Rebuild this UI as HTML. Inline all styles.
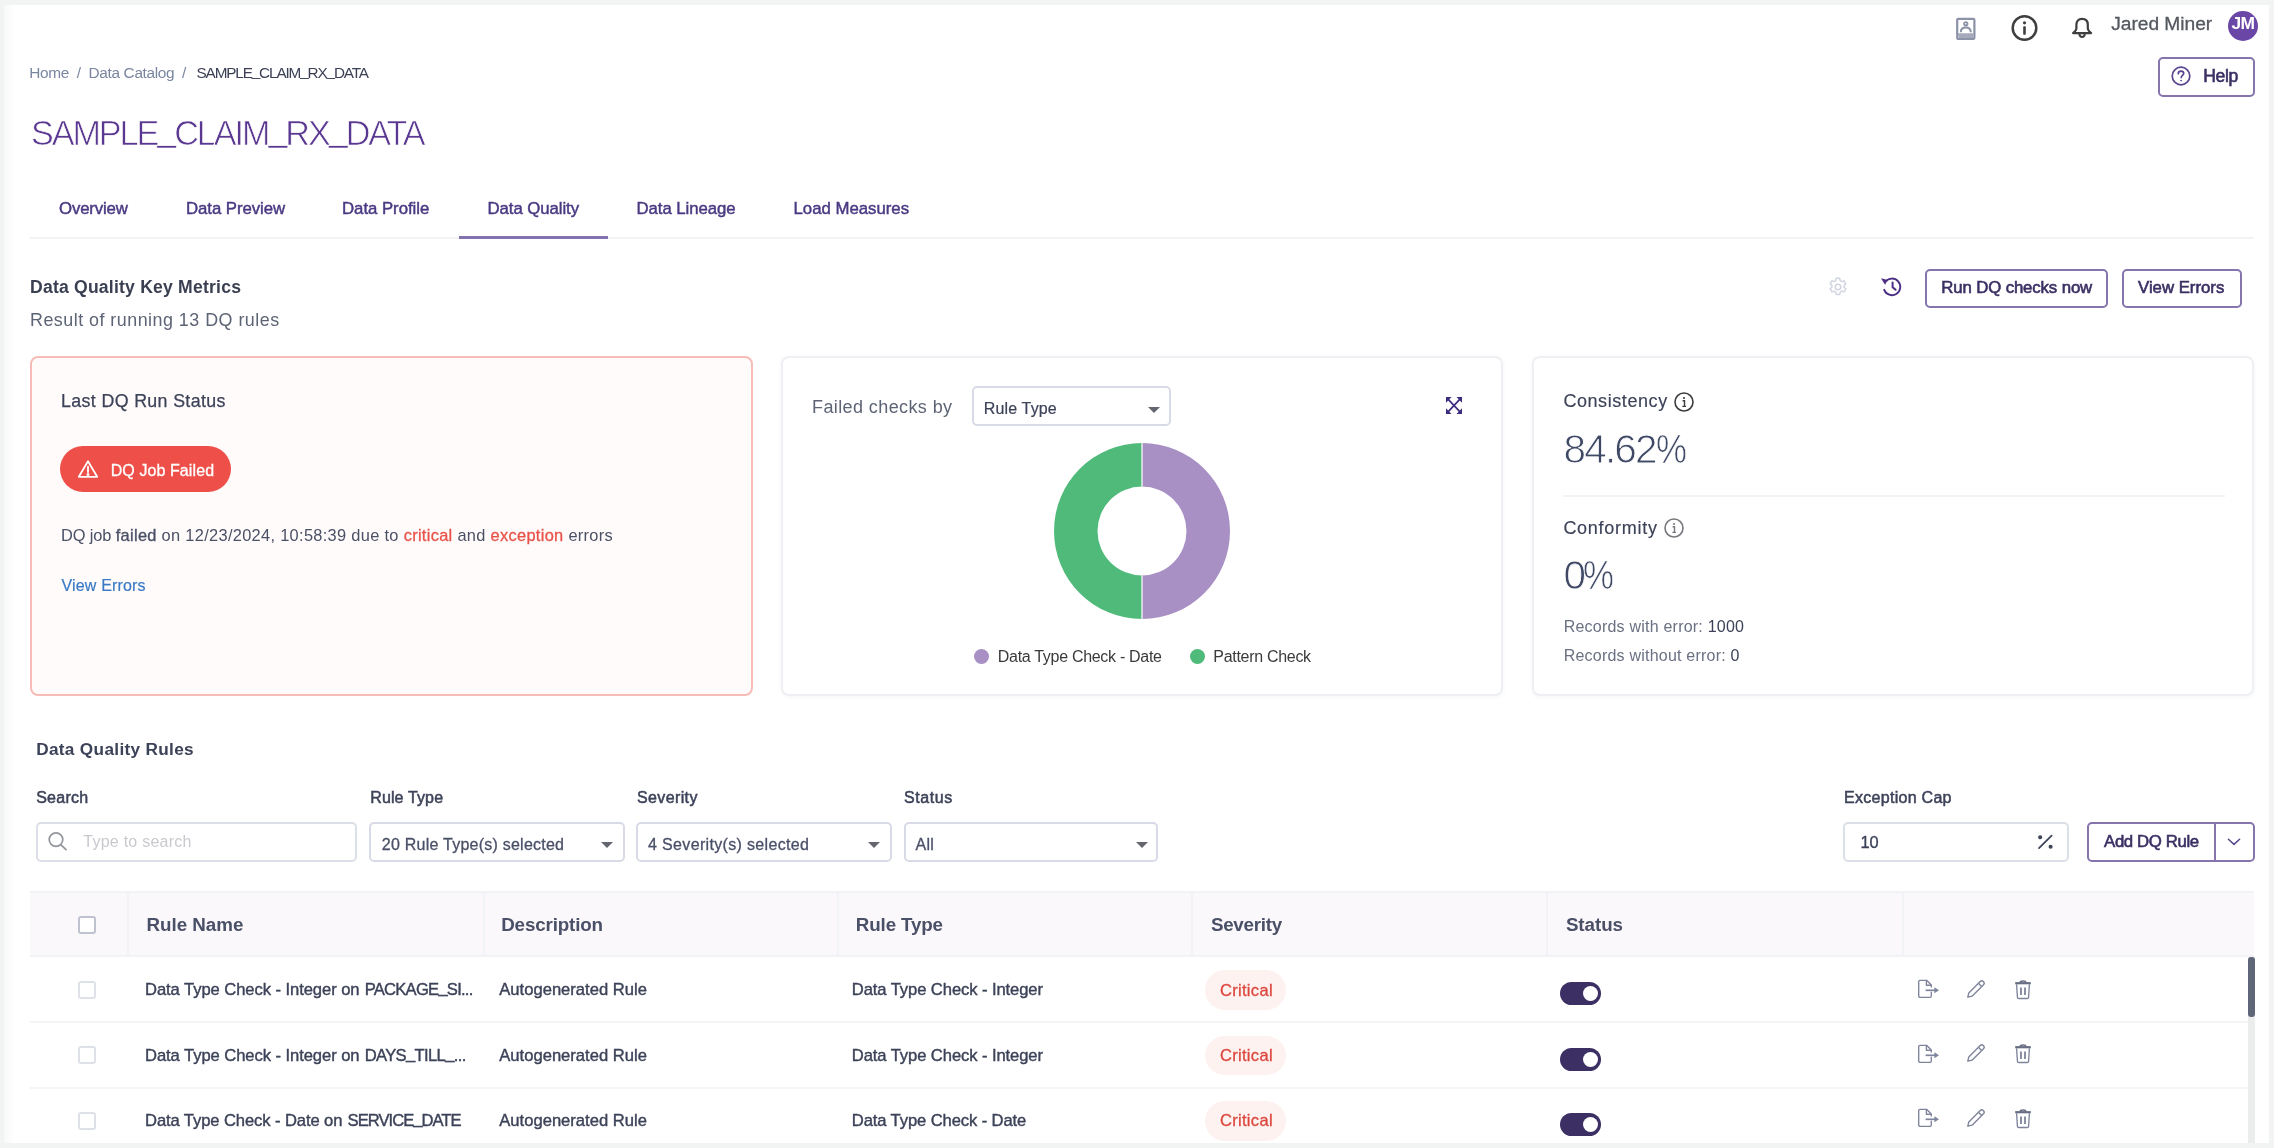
<!DOCTYPE html>
<html lang="en"><head><meta charset="utf-8"><title>SAMPLE_CLAIM_RX_DATA - Data Quality</title>
<style>
*{margin:0;padding:0;box-sizing:border-box}
html,body{width:2274px;height:1148px;overflow:hidden;background:#f2f4f3;font-family:"Liberation Sans", sans-serif;}
.t{position:absolute;white-space:nowrap;line-height:1;}
.t b.m{font-weight:400;-webkit-text-stroke:0.35px currentColor}
.t b.r{font-weight:400;color:#e8524a;-webkit-text-stroke:0.3px #e8524a}
.t b.d{font-weight:400;color:#3c4258}
.t i.u{font-style:normal;position:relative;top:-.115em}
.t .pc{display:inline-block;transform:scaleX(.86);transform-origin:0 50%;margin-right:-.124em;-webkit-text-stroke-width:.7px}
#page{position:absolute;left:0;top:0;width:2274px;height:1148px;background:#fff;overflow:hidden}
#page>*{position:absolute}
#wrap{left:0;top:0;width:2274px;height:1148px}
#wrap>*{position:absolute}
.card{border-radius:8px;background:#fff;border:2px solid #eff0f4;box-shadow:0 1px 4px rgba(40,50,80,.05)}
.card.fail{background:#fffbfa;border-color:#f7bcb7;box-shadow:none}
.btn{border:2px solid #8674ad;border-radius:5px;background:#fff}
.inp{border:2px solid #dcdfe7;border-radius:5px;background:#fff}
.sel{border:2px solid #d8dbe7;border-radius:5px;background:#fff}
.caret{width:0;height:0;border-left:6px solid transparent;border-right:6px solid transparent;border-top:6px solid #63666f}
.cb{width:18px;height:18px;border:2px solid #dfe1e8;border-radius:3px;background:#fff}
.cb.h{border-color:#bfc3d0}
.pill{border-radius:20px;background:#fef2f1}
.tog{width:41px;height:23px;border-radius:12px;background:#3b2f63}
.tog i{position:absolute;right:3.500px;top:4px;width:15px;height:15px;border-radius:50%;background:#fff}
.hl{background:#f4f4f7;height:2px}
.vl{background:#f2f3f7;width:2px}
svg{overflow:visible}
#frame>div{position:absolute}
#page{filter:blur(.7px)}
</style></head>
<body>
<div id="page">
<div id="wrap">
<!-- soft left edge -->
<div style="left:4px;top:5px;width:10px;height:1138px;background:linear-gradient(90deg,#f7f8f8,#ffffff)"></div>

<!-- top right icons -->
<svg style="left:1955px;top:17px" width="22" height="24" viewBox="0 0 22 24" fill="none" stroke="#8c92a8" stroke-width="2.200">
  <rect x="2.200" y="1.800" width="17.200" height="20.200" rx="1.200"/>
  <circle cx="10.800" cy="6.800" r="1.700" stroke-width="1.800"/>
  <path d="M5.800 15.200c0-3.200 2.200-4.600 5-4.600s5 1.400 5 4.600" stroke-width="2"/>
  <path d="M3 17.400h16M3.500 19.800h15" stroke="#a4a9bb" stroke-width="2.400"/>
</svg>
<svg style="left:2010px;top:14px" width="29" height="29" viewBox="0 0 29 29" fill="none">
  <circle cx="14.500" cy="14" r="11.800" stroke="#3f3f41" stroke-width="2.500"/>
  <circle cx="14.500" cy="8.800" r="1.600" fill="#3f3f41"/>
  <rect x="13.200" y="12.300" width="2.600" height="8.400" rx=".6" fill="#3f3f41"/>
</svg>
<svg style="left:2070px;top:16px" width="24" height="24" viewBox="0 0 24 24" fill="none" stroke="#3f3f41" stroke-width="2.200" stroke-linejoin="round" stroke-linecap="round">
  <path d="M12.100 2.900c-3.700 0-5.700 2.500-5.700 5.800v3.600c0 1.500-.6 2.400-1.600 3.300l-1.700 1.500h18l-1.700-1.500c-1-.9-1.600-1.800-1.600-3.300V8.700c0-3.300-2-5.800-5.700-5.800z"/>
  <path d="M9.400 17.600c0 2 1.100 3.400 2.700 3.400s2.700-1.400 2.700-3.400" stroke-width="2"/>
</svg>
<div style="left:2228px;top:10.500px;width:30px;height:30px;border-radius:50%;background:#6a46a6"></div>

<!-- help button -->
<div class="btn" style="left:2158px;top:57px;width:97px;height:39.500px"></div>
<svg style="left:2170px;top:64.800px" width="22" height="22" viewBox="0 0 22 22" fill="none" stroke="#5a4590" stroke-width="1.700">
  <circle cx="11" cy="11" r="8.800"/>
  <path d="M8.300 8.700c0-1.600 1.200-2.600 2.700-2.600s2.700 1 2.700 2.400c0 1.700-2.500 2-2.500 4" stroke-linecap="round"/>
  <circle cx="11.100" cy="15.600" r=".9" fill="#5a4590" stroke="none"/>
</svg>

<!-- tabs line -->
<div class="hl" style="left:30px;top:236.500px;width:2224px;background:#f3f3f6"></div>
<div style="left:459px;top:236px;width:149px;height:2.500px;background:#8372ad"></div>

<!-- key metrics actions -->
<svg style="left:1828px;top:277px" width="20" height="20" viewBox="0 0 20 20" fill="none" stroke="#d0d5e0" stroke-width="1.500" stroke-linejoin="round">
  <path d="M8.300 1.300h3.400l.5 2.300 1.700 1 2.200-.8 1.700 3-1.700 1.600v1.900l1.700 1.600-1.700 3-2.200-.8-1.700 1-.5 2.300H8.300l-.5-2.300-1.700-1-2.200.8-1.700-3 1.700-1.600V8.400L2.200 6.800l1.700-3 2.200.8 1.700-1z"/>
  <circle cx="10" cy="10" r="2.800"/>
</svg>
<svg style="left:1880px;top:276px" width="23" height="22" viewBox="0 0 23 22" fill="none" stroke="#4a2f85" stroke-width="1.900" stroke-linecap="round">
  <path d="M5.400 5.800A8.300 8.300 0 1 1 4.200 13.800"/>
  <path d="M1 2.300l5.800 1.500-1.600 5.300z" fill="#4a2f85" stroke="none"/>
  <path d="M12.600 6.400v4.800l3 2.600" stroke-width="2"/>
</svg>
<div class="btn" style="left:1925px;top:268.500px;width:183px;height:39.500px"></div>
<div class="btn" style="left:2122px;top:268.500px;width:120px;height:39.500px"></div>

<!-- cards -->
<div class="card fail" style="left:30px;top:355.500px;width:723px;height:340px"></div>
<div class="card" style="left:781px;top:355.500px;width:722px;height:340px"></div>
<div class="card" style="left:1532px;top:355.500px;width:722px;height:340px"></div>

<!-- card1 pill -->
<div style="left:60px;top:445.500px;width:171px;height:46px;border-radius:23px;background:#ee4f48"></div>
<svg style="left:77px;top:458.500px" width="22" height="20" viewBox="0 0 22 20" fill="none" stroke="#fff" stroke-width="1.800" stroke-linejoin="round" stroke-linecap="round">
  <path d="M11 2.200L1.800 17.800h18.400z"/>
  <path d="M11 7.800v5.200" stroke-width="1.900"/>
  <circle cx="11" cy="15.400" r=".6" fill="#fff"/>
</svg>

<!-- card2 -->
<div class="sel" style="left:972px;top:386px;width:199px;height:40px"></div>
<div class="caret" style="left:1148px;top:406.500px"></div>
<svg style="left:1444.500px;top:396px" width="18" height="19" viewBox="0 0 18 19" fill="#3d2b7d" stroke="#3d2b7d">
  <path d="M3 3.200L15 15.800M15 3.200L3 15.800" stroke-width="1.700" fill="none"/>
  <path d="M1 1h5.500L1 6.800zM17 1h-5.500L17 6.800zM1 18h5.500L1 12.200zM17 18h-5.500L17 12.200z" stroke="none"/>
</svg>
<svg style="left:1052px;top:441px" width="180" height="180" viewBox="-90 -90 180 180">
  <path d="M0 -88A88 88 0 0 1 0 88L0 44.500A44.500 44.500 0 0 0 0 -44.500Z" fill="#a88fc4"/>
  <path d="M0 88A88 88 0 0 1 0 -88L0 -44.500A44.500 44.500 0 0 0 0 44.500Z" fill="#50ba7a"/>
  <path d="M0 -88V-44.500M0 44.500V88" stroke="#fff" stroke-width="1.200"/>
</svg>
<div style="left:974px;top:648.500px;width:15px;height:15px;border-radius:50%;background:#a88fc4"></div>
<div style="left:1189.500px;top:648.500px;width:15px;height:15px;border-radius:50%;background:#50ba7a"></div>

<!-- card3 -->
<svg style="left:1673px;top:390.500px" width="22" height="22" viewBox="0 0 22 22" fill="none">
  <circle cx="11" cy="11" r="9" stroke="#3c3c40" stroke-width="1.600"/>
  <circle cx="11" cy="7" r="1.100" fill="#3c3c40"/><path d="M9.600 9.800h1.900v5.400M9.400 15.400h3.600" stroke="#3c3c40" stroke-width="1.400"/>
</svg>
<div class="hl" style="left:1563px;top:494.500px;width:662px;background:#f3f3f6"></div>
<svg style="left:1663.200px;top:517.200px" width="22" height="22" viewBox="0 0 22 22" fill="none">
  <circle cx="11" cy="11" r="9" stroke="#77787d" stroke-width="1.600"/>
  <circle cx="11" cy="7" r="1.100" fill="#77787d"/><path d="M9.600 9.800h1.900v5.400M9.400 15.400h3.600" stroke="#77787d" stroke-width="1.400"/>
</svg>

<!-- filters -->
<div class="inp" style="left:36px;top:822px;width:321px;height:39.500px"></div>
<svg style="left:47px;top:830.500px" width="22" height="20" viewBox="0 0 22 20" fill="none" stroke="#93959c" stroke-width="1.700" stroke-linecap="round">
  <circle cx="9" cy="8.600" r="6.800"/><path d="M14 13.800l5 4.800"/>
</svg>
<div class="sel" style="left:368.500px;top:822px;width:256px;height:39.500px"></div>
<div class="caret" style="left:600.500px;top:841.500px"></div>
<div class="sel" style="left:635.500px;top:822px;width:256px;height:39.500px"></div>
<div class="caret" style="left:868px;top:841.500px"></div>
<div class="sel" style="left:904.300px;top:822px;width:254px;height:39.500px"></div>
<div class="caret" style="left:1135.500px;top:841.500px"></div>
<div class="inp" style="left:1842.500px;top:822px;width:226px;height:39.500px"></div>
<svg style="left:2037px;top:834px" width="17" height="16" viewBox="0 0 17 16" fill="none" stroke="#3c4258" stroke-width="1.700" stroke-linecap="round">
  <path d="M2 14.200L14.600 1.600"/><circle cx="3.200" cy="3.200" r="1.200" fill="#3c4258"/><circle cx="13.600" cy="12.800" r="1.200" fill="#3c4258"/>
</svg>
<div class="btn" style="left:2087px;top:821.500px;width:168px;height:40px"></div>
<div style="left:2214px;top:822px;width:2px;height:39px;background:#8674ad"></div>
<svg style="left:2227px;top:837.500px" width="14" height="9" viewBox="0 0 14 9" fill="none" stroke="#58468f" stroke-width="1.500" stroke-linecap="round" stroke-linejoin="round"><path d="M1.400 1.200L7 6.400l5.600-5.200"/></svg>

<!-- table -->
<div style="left:30px;top:891px;width:2224px;height:65px;background:#faf8fa;border-top:2px solid #f3f3f7"></div>
<div class="vl" style="left:127px;top:893px;height:63px"></div>
<div class="vl" style="left:483px;top:893px;height:63px"></div>
<div class="vl" style="left:837px;top:893px;height:63px"></div>
<div class="vl" style="left:1191px;top:893px;height:63px"></div>
<div class="vl" style="left:1546px;top:893px;height:63px"></div>
<div class="vl" style="left:1902px;top:893px;height:63px"></div>
<div class="hl" style="left:30px;top:955px;width:2224px;background:#f3f3f6"></div>
<div class="hl" style="left:30px;top:1020.500px;width:2218px"></div>
<div class="hl" style="left:30px;top:1086.500px;width:2218px"></div>
<div class="cb h" style="left:78px;top:915.500px"></div>
<div class="cb" style="left:78px;top:980.5px"></div>
<div class="pill" style="left:1205px;top:970.0px;width:80.500px;height:39.500px"></div>
<div class="tog" style="left:1560px;top:982.3px"><i></i></div>
<svg style="left:1917px;top:979.0px" width="23" height="20" viewBox="0 0 23 20" fill="none" stroke="#7e849b" stroke-width="1.350" stroke-linejoin="round">
  <path d="M14.300 12.800v4.200a1.300 1.300 0 0 1-1.300 1.300H3a1.300 1.300 0 0 1-1.300-1.300V2.600A1.300 1.300 0 0 1 3 1.300h6.600l4.700 4.700v2.600"/>
  <path d="M9.400 1.500v4.700h4.700"/>
  <path d="M8.600 11.300h9.400" stroke-width="1.700"/><path d="M17.400 8.300l4.600 3-4.600 3z" fill="#7e849b" stroke="none"/>
</svg>
<svg style="left:1966px;top:978.5px" width="20" height="20" viewBox="0 0 20 20" fill="none" stroke="#7e849b" stroke-width="1.350" stroke-linejoin="round">
  <path d="M1.800 18.200l1-4.300L14.200 2.500a2.200 2.200 0 0 1 3.100 0l.2.200a2.200 2.200 0 0 1 0 3.100L6.100 17.200z"/>
  <path d="M12.400 4.300l3.300 3.300"/>
</svg>
<svg style="left:2013.500px;top:979.5px" width="18" height="20" viewBox="0 0 18 20" fill="none" stroke="#7e849b" stroke-width="1.350" stroke-linejoin="round">
  <path d="M1.200 3.200h15.600" stroke-width="2.200" stroke="#686d83"/>
  <path d="M6 2.800c0-1.200 1.200-1.800 3-1.800s3 .6 3 1.800" stroke="#686d83"/>
  <path d="M2.600 4.200l.8 13a1.400 1.400 0 0 0 1.400 1.300h8.400a1.400 1.400 0 0 0 1.400-1.300l.8-13"/>
  <path d="M7 7.500v7.500M11 7.500v7.500" stroke-width="1.800"/>
</svg>
<div class="cb" style="left:78px;top:1046.0px"></div>
<div class="pill" style="left:1205px;top:1035.5px;width:80.500px;height:39.500px"></div>
<div class="tog" style="left:1560px;top:1047.8px"><i></i></div>
<svg style="left:1917px;top:1043.6px" width="23" height="20" viewBox="0 0 23 20" fill="none" stroke="#7e849b" stroke-width="1.350" stroke-linejoin="round">
  <path d="M14.300 12.800v4.200a1.300 1.300 0 0 1-1.300 1.300H3a1.300 1.300 0 0 1-1.300-1.300V2.600A1.300 1.300 0 0 1 3 1.300h6.600l4.700 4.700v2.600"/>
  <path d="M9.400 1.500v4.700h4.700"/>
  <path d="M8.600 11.300h9.400" stroke-width="1.700"/><path d="M17.400 8.300l4.600 3-4.600 3z" fill="#7e849b" stroke="none"/>
</svg>
<svg style="left:1966px;top:1043.1px" width="20" height="20" viewBox="0 0 20 20" fill="none" stroke="#7e849b" stroke-width="1.350" stroke-linejoin="round">
  <path d="M1.800 18.200l1-4.300L14.200 2.500a2.200 2.200 0 0 1 3.100 0l.2.200a2.200 2.200 0 0 1 0 3.100L6.100 17.200z"/>
  <path d="M12.400 4.300l3.300 3.300"/>
</svg>
<svg style="left:2013.500px;top:1044.1px" width="18" height="20" viewBox="0 0 18 20" fill="none" stroke="#7e849b" stroke-width="1.350" stroke-linejoin="round">
  <path d="M1.200 3.200h15.600" stroke-width="2.200" stroke="#686d83"/>
  <path d="M6 2.800c0-1.200 1.200-1.800 3-1.800s3 .6 3 1.800" stroke="#686d83"/>
  <path d="M2.600 4.200l.8 13a1.400 1.400 0 0 0 1.400 1.300h8.400a1.400 1.400 0 0 0 1.400-1.300l.8-13"/>
  <path d="M7 7.500v7.500M11 7.500v7.500" stroke-width="1.800"/>
</svg>
<div class="cb" style="left:78px;top:1111.5px"></div>
<div class="pill" style="left:1205px;top:1101.0px;width:80.500px;height:39.500px"></div>
<div class="tog" style="left:1560px;top:1113.3px"><i></i></div>
<svg style="left:1917px;top:1108.2px" width="23" height="20" viewBox="0 0 23 20" fill="none" stroke="#7e849b" stroke-width="1.350" stroke-linejoin="round">
  <path d="M14.300 12.800v4.200a1.300 1.300 0 0 1-1.300 1.300H3a1.300 1.300 0 0 1-1.300-1.300V2.600A1.300 1.300 0 0 1 3 1.300h6.600l4.700 4.700v2.600"/>
  <path d="M9.400 1.500v4.700h4.700"/>
  <path d="M8.600 11.300h9.400" stroke-width="1.700"/><path d="M17.400 8.300l4.600 3-4.600 3z" fill="#7e849b" stroke="none"/>
</svg>
<svg style="left:1966px;top:1107.7px" width="20" height="20" viewBox="0 0 20 20" fill="none" stroke="#7e849b" stroke-width="1.350" stroke-linejoin="round">
  <path d="M1.800 18.200l1-4.300L14.200 2.500a2.200 2.200 0 0 1 3.100 0l.2.200a2.200 2.200 0 0 1 0 3.100L6.100 17.200z"/>
  <path d="M12.400 4.300l3.300 3.300"/>
</svg>
<svg style="left:2013.500px;top:1108.7px" width="18" height="20" viewBox="0 0 18 20" fill="none" stroke="#7e849b" stroke-width="1.350" stroke-linejoin="round">
  <path d="M1.200 3.200h15.600" stroke-width="2.200" stroke="#686d83"/>
  <path d="M6 2.800c0-1.200 1.200-1.800 3-1.800s3 .6 3 1.800" stroke="#686d83"/>
  <path d="M2.600 4.200l.8 13a1.400 1.400 0 0 0 1.400 1.300h8.400a1.400 1.400 0 0 0 1.400-1.300l.8-13"/>
  <path d="M7 7.500v7.500M11 7.500v7.500" stroke-width="1.800"/>
</svg>
<!-- scrollbar -->
<div style="left:2248px;top:957px;width:6.500px;height:186px;background:#ebecec"></div>
<div style="left:2248px;top:957px;width:6.500px;height:60px;border-radius:3px;background:#5f6677"></div>

</div>

<div class="t" style="left:29.3px;top:64.7px;font-size:15.4px;letter-spacing:-0.35px;color:#7a86a0;">Home&nbsp; /&nbsp; Data Catalog&nbsp; /</div>
<div class="t" style="left:196.5px;top:64.7px;font-size:15.3px;letter-spacing:-1.14px;color:#3c4055;">SAMPLE<i class="u">_</i>CLAIM<i class="u">_</i>RX<i class="u">_</i>DATA</div>
<div class="t" style="left:31.0px;top:115.6px;font-size:34.2px;letter-spacing:-2.07px;color:#5a3790;-webkit-text-stroke:0.7px #fff;">SAMPLE<i class="u">_</i>CLAIM<i class="u">_</i>RX<i class="u">_</i>DATA</div>
<div class="t" style="left:59.1px;top:200.5px;font-size:16.8px;letter-spacing:-0.18px;color:#4a3982;-webkit-text-stroke:0.45px currentColor;">Overview</div>
<div class="t" style="left:186.0px;top:200.5px;font-size:16.8px;letter-spacing:-0.07px;color:#4a3982;-webkit-text-stroke:0.45px currentColor;">Data Preview</div>
<div class="t" style="left:342.0px;top:200.5px;font-size:16.8px;letter-spacing:-0.03px;color:#4a3982;-webkit-text-stroke:0.45px currentColor;">Data Profile</div>
<div class="t" style="left:487.5px;top:200.5px;font-size:16.8px;letter-spacing:-0.07px;color:#4a3982;-webkit-text-stroke:0.45px currentColor;">Data Quality</div>
<div class="t" style="left:636.5px;top:200.5px;font-size:16.8px;letter-spacing:-0.07px;color:#4a3982;-webkit-text-stroke:0.45px currentColor;">Data Lineage</div>
<div class="t" style="left:793.5px;top:200.5px;font-size:16.8px;letter-spacing:-0.01px;color:#4a3982;-webkit-text-stroke:0.45px currentColor;">Load Measures</div>
<div class="t" style="left:30.0px;top:279.0px;font-size:17.6px;letter-spacing:0.20px;color:#3a3f52;font-weight:700;">Data Quality Key Metrics</div>
<div class="t" style="left:30.0px;top:312.4px;font-size:17.9px;letter-spacing:0.48px;color:#5d6475;">Result of running 13 DQ rules</div>
<div class="t" style="left:2111.2px;top:13.9px;font-size:19.2px;letter-spacing:-0.03px;color:#54585f;-webkit-text-stroke:0.3px currentColor;">Jared Miner</div>
<div class="t" style="left:2231.6px;top:15.4px;font-size:17.4px;letter-spacing:-0.78px;color:#ffffff;font-weight:700;">JM</div>
<div class="t" style="left:2203.2px;top:67.8px;font-size:17.6px;letter-spacing:-0.40px;color:#3b2f63;-webkit-text-stroke:0.6px currentColor;">Help</div>
<div class="t" style="left:1941.2px;top:280.0px;font-size:16.8px;letter-spacing:-0.12px;color:#3b2f63;-webkit-text-stroke:0.6px currentColor;">Run DQ checks now</div>
<div class="t" style="left:2138.0px;top:280.0px;font-size:16.8px;letter-spacing:-0.01px;color:#3b2f63;-webkit-text-stroke:0.6px currentColor;">View Errors</div>
<div class="t" style="left:61.1px;top:392.6px;font-size:17.8px;letter-spacing:0.36px;color:#3c4258;-webkit-text-stroke:0.25px currentColor;">Last DQ Run Status</div>
<div class="t" style="left:110.7px;top:462.7px;font-size:16px;letter-spacing:0.09px;color:#ffffff;-webkit-text-stroke:0.3px currentColor;">DQ Job Failed</div>
<div class="t" style="left:61.1px;top:526.6px;font-size:16.4px;letter-spacing:-0.17px;color:#4a5066;">DQ job</div>
<div class="t" style="left:115.7px;top:526.6px;font-size:16.4px;letter-spacing:0.31px;color:#4a5066;"><b class="m">failed</b> on 12/23/2024, 10:58:39 due to <b class="r">critical</b> and <b class="r">exception</b> errors</div>
<div class="t" style="left:61.6px;top:578.1px;font-size:16px;letter-spacing:0.14px;color:#3a7ac6;-webkit-text-stroke:0.2px currentColor;">View Errors</div>
<div class="t" style="left:812.0px;top:397.5px;font-size:18px;letter-spacing:0.40px;color:#5d6475;">Failed checks by</div>
<div class="t" style="left:983.8px;top:400.9px;font-size:16px;letter-spacing:0.15px;color:#3c4258;-webkit-text-stroke:0.2px currentColor;">Rule Type</div>
<div class="t" style="left:997.8px;top:648.9px;font-size:16px;letter-spacing:-0.30px;color:#3a3a3a;">Data Type Check - Date</div>
<div class="t" style="left:1213.3px;top:648.9px;font-size:16px;letter-spacing:-0.30px;color:#3a3a3a;">Pattern Check</div>
<div class="t" style="left:1563.4px;top:392.3px;font-size:18px;letter-spacing:0.57px;color:#3c4258;-webkit-text-stroke:0.15px currentColor;">Consistency</div>
<div class="t" style="left:1563.6px;top:429.2px;font-size:40.5px;letter-spacing:-1.88px;color:#3f4966;-webkit-text-stroke:0.9px #fff;">84.62<span class="pc">%</span></div>
<div class="t" style="left:1563.4px;top:519.4px;font-size:18px;letter-spacing:0.73px;color:#3c4258;-webkit-text-stroke:0.15px currentColor;">Conformity</div>
<div class="t" style="left:1563.6px;top:555.1px;font-size:40.5px;letter-spacing:-3.35px;color:#3f4966;-webkit-text-stroke:0.9px #fff;">0<span class="pc">%</span></div>
<div class="t" style="left:1563.7px;top:618.8px;font-size:16px;letter-spacing:0.22px;color:#6a7082;">Records with error: <b class="d">1000</b></div>
<div class="t" style="left:1563.7px;top:647.6px;font-size:16px;letter-spacing:0.22px;color:#6a7082;">Records without error: <b class="d">0</b></div>
<div class="t" style="left:36.2px;top:740.7px;font-size:17.2px;letter-spacing:0.33px;color:#3c4258;font-weight:700;">Data Quality Rules</div>
<div class="t" style="left:36.2px;top:790.2px;font-size:16px;letter-spacing:0.25px;color:#3c4258;-webkit-text-stroke:0.5px currentColor;">Search</div>
<div class="t" style="left:370.2px;top:790.3px;font-size:16px;letter-spacing:0.14px;color:#3c4258;-webkit-text-stroke:0.5px currentColor;">Rule Type</div>
<div class="t" style="left:637.0px;top:790.3px;font-size:16px;letter-spacing:0.37px;color:#3c4258;-webkit-text-stroke:0.5px currentColor;">Severity</div>
<div class="t" style="left:904.0px;top:790.3px;font-size:16px;letter-spacing:0.57px;color:#3c4258;-webkit-text-stroke:0.5px currentColor;">Status</div>
<div class="t" style="left:1844.1px;top:790.2px;font-size:16px;letter-spacing:0.28px;color:#3c4258;-webkit-text-stroke:0.5px currentColor;">Exception Cap</div>
<div class="t" style="left:83.3px;top:833.8px;font-size:16px;letter-spacing:0.24px;color:#c9cacf;">Type to search</div>
<div class="t" style="left:381.8px;top:836.5px;font-size:16px;letter-spacing:0.24px;color:#4a5068;-webkit-text-stroke:0.3px currentColor;">20 Rule Type(s) selected</div>
<div class="t" style="left:648.1px;top:836.5px;font-size:16px;letter-spacing:0.33px;color:#4a5068;-webkit-text-stroke:0.3px currentColor;">4 Severity(s) selected</div>
<div class="t" style="left:915.6px;top:836.5px;font-size:16px;letter-spacing:0.25px;color:#4a5068;-webkit-text-stroke:0.3px currentColor;">All</div>
<div class="t" style="left:1860.4px;top:834.4px;font-size:16.4px;letter-spacing:0.11px;color:#3c4258;-webkit-text-stroke:0.35px currentColor;">10</div>
<div class="t" style="left:2104.1px;top:834.0px;font-size:16.8px;letter-spacing:-0.39px;color:#3b2f63;-webkit-text-stroke:0.6px currentColor;">Add DQ Rule</div>
<div class="t" style="left:146.5px;top:915.5px;font-size:18.8px;letter-spacing:-0.02px;color:#4a5068;font-weight:700;">Rule Name</div>
<div class="t" style="left:501.2px;top:915.5px;font-size:18.8px;letter-spacing:-0.15px;color:#4a5068;font-weight:700;">Description</div>
<div class="t" style="left:855.8px;top:915.5px;font-size:18.8px;letter-spacing:-0.14px;color:#4a5068;font-weight:700;">Rule Type</div>
<div class="t" style="left:1210.9px;top:915.5px;font-size:18.8px;letter-spacing:-0.25px;color:#4a5068;font-weight:700;">Severity</div>
<div class="t" style="left:1565.9px;top:915.5px;font-size:18.8px;letter-spacing:-0.06px;color:#4a5068;font-weight:700;">Status</div>
<div class="t" style="left:145.0px;top:982.2px;font-size:16.6px;letter-spacing:-0.07px;color:#3c4258;-webkit-text-stroke:0.4px currentColor;">Data Type Check - Integer on</div>
<div class="t" style="left:364.7px;top:982.2px;font-size:16.6px;letter-spacing:-0.76px;color:#3c4258;-webkit-text-stroke:0.4px currentColor;">PACKAGE<i class="u">_</i>SI...</div>
<div class="t" style="left:499.3px;top:982.2px;font-size:16.6px;letter-spacing:0.00px;color:#3c4258;-webkit-text-stroke:0.4px currentColor;">Autogenerated Rule</div>
<div class="t" style="left:851.8px;top:982.2px;font-size:16.6px;letter-spacing:-0.09px;color:#3c4258;-webkit-text-stroke:0.4px currentColor;">Data Type Check - Integer</div>
<div class="t" style="left:1219.9px;top:981.6px;font-size:16.5px;letter-spacing:0.32px;color:#dc473d;-webkit-text-stroke:0.3px currentColor;">Critical</div>
<div class="t" style="left:145.0px;top:1047.8px;font-size:16.6px;letter-spacing:-0.07px;color:#3c4258;-webkit-text-stroke:0.4px currentColor;">Data Type Check - Integer on</div>
<div class="t" style="left:364.7px;top:1047.8px;font-size:16.6px;letter-spacing:-0.66px;color:#3c4258;-webkit-text-stroke:0.4px currentColor;">DAYS<i class="u">_</i>TILL<i class="u">_</i>...</div>
<div class="t" style="left:499.3px;top:1047.8px;font-size:16.6px;letter-spacing:0.00px;color:#3c4258;-webkit-text-stroke:0.4px currentColor;">Autogenerated Rule</div>
<div class="t" style="left:851.8px;top:1047.8px;font-size:16.6px;letter-spacing:-0.09px;color:#3c4258;-webkit-text-stroke:0.4px currentColor;">Data Type Check - Integer</div>
<div class="t" style="left:1219.9px;top:1047.0px;font-size:16.5px;letter-spacing:0.32px;color:#dc473d;-webkit-text-stroke:0.3px currentColor;">Critical</div>
<div class="t" style="left:145.0px;top:1113.4px;font-size:16.6px;letter-spacing:-0.10px;color:#3c4258;-webkit-text-stroke:0.4px currentColor;">Data Type Check - Date on</div>
<div class="t" style="left:347.6px;top:1113.4px;font-size:16.6px;letter-spacing:-0.99px;color:#3c4258;-webkit-text-stroke:0.4px currentColor;">SERVICE<i class="u">_</i>DATE</div>
<div class="t" style="left:499.3px;top:1113.4px;font-size:16.6px;letter-spacing:0.00px;color:#3c4258;-webkit-text-stroke:0.4px currentColor;">Autogenerated Rule</div>
<div class="t" style="left:851.8px;top:1113.4px;font-size:16.6px;letter-spacing:-0.11px;color:#3c4258;-webkit-text-stroke:0.4px currentColor;">Data Type Check - Date</div>
<div class="t" style="left:1219.9px;top:1112.4px;font-size:16.5px;letter-spacing:0.32px;color:#dc473d;-webkit-text-stroke:0.3px currentColor;">Critical</div>
</div>
<div id="frame">
<!-- frame edges on top -->
<div style="left:0;top:0;width:2274px;height:5px;background:#f2f4f3"></div>
<div style="left:0;top:1143px;width:2274px;height:5px;background:#f2f4f3"></div>
<div style="left:0;top:0;width:4px;height:1148px;background:#f2f4f3"></div>
<div style="left:2269px;top:0;width:5px;height:1148px;background:#f2f4f3"></div>
</div>
</body></html>
